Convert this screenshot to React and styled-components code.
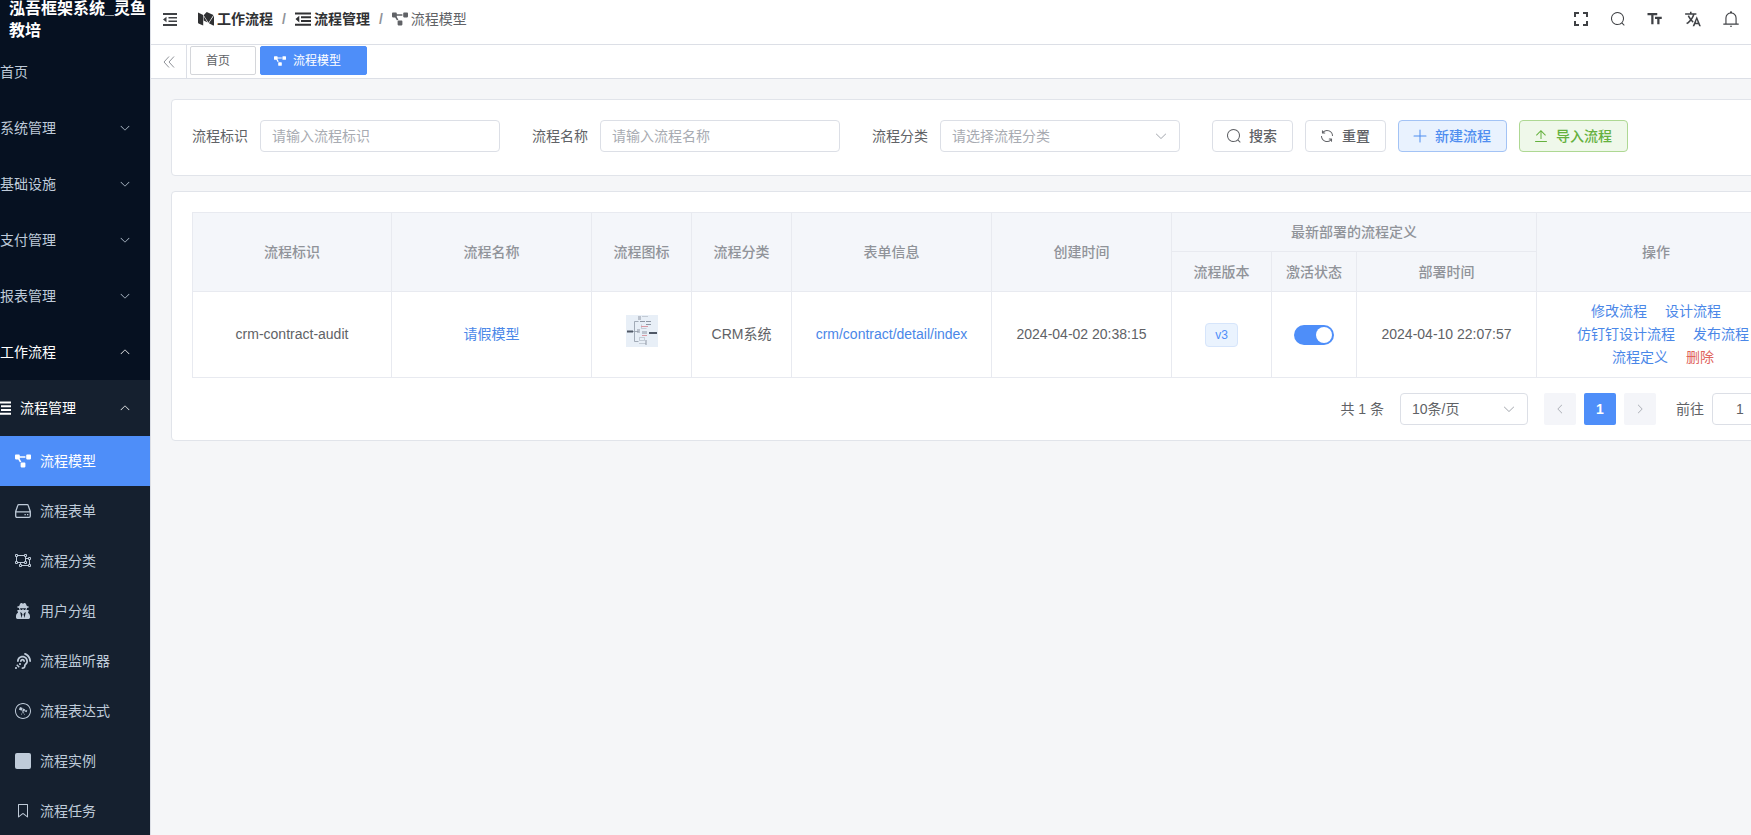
import { useState } from "react";
import styled, { createGlobalStyle, css } from "styled-components";
import {
	FaAssistiveListeningSystems,
	FaProjectDiagram,
	FaUserSecret,
	FaWpexplorer,
} from "react-icons/fa";
import { IoLanguageSharp } from "react-icons/io5";

const color = {
	primary: "#4e8ef9",
	text: "#606266",
	strong: "#303133",
	muted: "#909399",
	placeholder: "#a8abb2",
	border: "#dcdfe6",
	line: "#e8eaf0",
	page: "#f5f6f8",
	side: "#061121",
	sideDeep: "#15202f",
	sideText: "#bfcbd9",
};

const GlobalStyle = createGlobalStyle`
	*, *::before, *::after {
		box-sizing: border-box;
	}

	body {
		margin: 0;
		background: ${color.page};
		color: ${color.text};
		font-family: "Liberation Sans", "Noto Sans CJK SC", sans-serif;
		font-size: 14px;
		line-height: 20px;
	}

	button, input, select {
		font: inherit;
		color: inherit;
	}

	a {
		text-decoration: none;
	}

	svg {
		display: block;
		flex: none;
	}
`;

const paths = {
	search: "m795.904 750.72 124.992 124.928a32 32 0 0 1-45.248 45.248L750.656 795.904a416 416 0 1 1 45.248-45.248zM480 832a352 352 0 1 0 0-704 352 352 0 0 0 0 704",
	refresh: "M771.776 794.88A384 384 0 0 1 128 512h64a320 320 0 0 0 555.712 216.448H654.72a32 32 0 1 1 0-64h149.056a32 32 0 0 1 32 32v148.928a32 32 0 1 1-64 0v-50.56zM276.288 295.616h92.992a32 32 0 0 1 0 64H220.16a32 32 0 0 1-32-32V178.56a32 32 0 0 1 64 0v50.56A384 384 0 0 1 896.128 512h-64a320 320 0 0 0-555.776-216.384z",
	plus: "M480 480V128a32 32 0 0 1 64 0v352h352a32 32 0 1 1 0 64H544v352a32 32 0 1 1-64 0V544H128a32 32 0 0 1 0-64z",
	upload: "M160 832h704a32 32 0 1 1 0 64H160a32 32 0 1 1 0-64m384-578.304V704h-64V247.296L237.248 490.048 192 444.8 508.8 128l316.8 316.8-45.312 45.248L544 253.696z",
	down: "M831.872 340.864 512 652.672 192.128 340.864a30.592 30.592 0 0 0-42.752 0 29.12 29.12 0 0 0 0 41.6L489.664 714.24a32 32 0 0 0 44.672 0l340.288-331.712a29.12 29.12 0 0 0 0-41.728 30.592 30.592 0 0 0-42.752 0z",
	bell: "M512 64a64 64 0 0 1 64 64v64H448v-64a64 64 0 0 1 64-64M256 768h512V448a256 256 0 1 0-512 0zm256-640a320 320 0 0 1 320 320v384H192V448a320 320 0 0 1 320-320M96 768h832q32 0 32 32t-32 32H96q-32 0-32-32t32-32m352 128h128a64 64 0 0 1-128 0",
	tag: "M256 128v698.88l196.032-156.864a96 96 0 0 1 119.936 0L768 826.816V128zm-32-64h576a32 32 0 0 1 32 32v797.44a32 32 0 0 1-51.968 24.96L531.968 720a32 32 0 0 0-39.936 0L243.968 918.4A32 32 0 0 1 192 893.44V96a32 32 0 0 1 32-32",
};

function Glyph({ name, size = 16, turn = 0 })
{
	return (
		<svg width={size} height={size} viewBox="0 0 1024 1024" fill="currentColor" aria-hidden="true">
			<path d={paths[name]} transform={`rotate(${turn} 512 512)`} />
		</svg>
	)
}

function FullscreenIcon()
{
	return (
		<svg width="18" height="18" viewBox="0 0 18 18" fill="none" stroke="currentColor" strokeWidth="2" aria-hidden="true">
			<path d="M3 7V3h4M11 3h4v4M15 11v4h-4M7 15H3v-4" />
		</svg>
	)
}

function SizeIcon()
{
	return (
		<svg width="18" height="18" viewBox="0 0 24 24" fill="currentColor" aria-hidden="true">
			<path d="M2 4v3h5v12h3V7h5V4H2m19 5h-9v3h3v7h3v-7h3V9Z" />
		</svg>
	)
}

function FoldIcon()
{
	return (
		<svg width="16" height="16" viewBox="0 0 16 16" fill="currentColor" aria-hidden="true">
			<path d="M1 2h14v2H1zM6.500 6H15v1.500H6.500zM6.500 9.500H15V11H6.500zM1 13h14v2H1zM1 8.500 4.500 5.800v5.400z" />
		</svg>
	)
}

function OutdentIcon()
{
	return (
		<svg width="16" height="16" viewBox="0 0 16 16" fill="currentColor" aria-hidden="true">
			<path d="M0 1.500h16v2H0zM6 5.300h10v2H6zM6 9h10v2H6zM0 12.700h16v2H0zM.500 8.100 4.300 4.800v6.600z" />
		</svg>
	)
}

function FoldedMIcon()
{
	return (
		<svg width="16" height="16" viewBox="0 0 16 16" fill="currentColor" aria-hidden="true">
			<path d="M0 1.500 5.200 4.100V14.600L.5 12.400Q0 12.100 0 11.500Z" />
			<path d="M5.700 5.200 9.600 11.500 5.700 9.600Z" />
			<path d="M5.700 4.200 8.200 1.400Q8.700 .9 9.300 1.200L15.400 4.100 10.500 11.800Z" />
			<path d="M16 4.600V13.900Q16 14.800 15.200 14.400L10.900 12.300Z" />
		</svg>
	)
}

function DriveIcon()
{
	return (
		<svg width="16" height="16" viewBox="0 0 16 16" fill="none" stroke="currentColor" strokeWidth="1.300" aria-hidden="true">
			<path d="M3.800 1.600h8.400q.8 0 1 .8L15.300 8.500V13q0 1.300-1.300 1.300H2Q.7 14.300.7 13V8.500L2.800 2.400q.2-.8 1-.8ZM.8 8.800h14.400" strokeLinejoin="round" />
			<path d="M9.500 11.700h1.300M12 11.700h1.300" />
		</svg>
	)
}

function UngroupIcon()
{
	return (
		<svg width="16" height="16" viewBox="0 0 16 16" fill="none" stroke="currentColor" aria-hidden="true">
			<path d="M1.500 2.500h9v7h-9zM10.500 5.500h4v7h-9v-3" />
			<path d="M.5 1.500h2v2h-2zM9.500 1.500h2v2h-2zM.5 8.500h2v2h-2zM9.500 8.500h2v2h-2zM13.500 4.500h2v2h-2zM13.500 11.500h2v2h-2zM4.500 11.500h2v2h-2z" fill={color.sideDeep} />
		</svg>
	)
}

function SquareIcon()
{
	return (
		<svg width="16" height="16" viewBox="0 0 16 16" fill="currentColor" aria-hidden="true">
			<rect width="16" height="16" rx="2" />
		</svg>
	)
}

function DoubleLeftIcon()
{
	return (
		<svg width="14" height="14" viewBox="0 0 14 14" fill="none" stroke="currentColor" aria-hidden="true">
			<path d="M7 1.500 2 7l5 5.500M12 1.500 7 7l5 5.500" />
		</svg>
	)
}

const Preview = styled.svg`
	display: inline-block;
	vertical-align: baseline;
`;

// small preview of the process drawing
function Thumbnail()
{
	return (
		<Preview width="32" height="32" viewBox="0 0 32 32" role="img" aria-label="流程图标">
			<rect width="32" height="32" fill="#e8eff7" />
			<g fill="none" stroke="#8f99a6" strokeWidth=".8">
				<path d="M6 16.500h2M8.500 6.500v20M8.500 6.500h4M8.500 26.500h4M8.500 16.500h4" />
				<path d="M13.500 22.500h5v3h-5zM13 28.500h7M15.500 9.500v4h5" strokeOpacity=".5" />
			</g>
			<g fill="#8d96a3">
				<rect x="12" y="1" width="3" height="4" opacity=".5" />
				<rect x="16" y="1" width="6" height="1" opacity=".4" />
				<rect x="14" y="6" width="5" height="1" />
				<rect x="20" y="6" width="5" height="1" />
				<rect x="20" y="9" width="5" height="1" />
				<rect x="11" y="14" width="3" height="4" opacity=".5" />
				<rect x="16" y="16" width="5" height="3" opacity=".5" />
				<rect x="19" y="25" width="2" height="5" opacity=".5" />
			</g>
			<path d="M1 15.500h6v2H1zM23 17h8v2h-8z" fill="#4f5866" />
			<path d="M15 11.500h7M16 20.500h5" stroke="#d99aa4" />
		</Preview>
	)
}

const Layout = styled.div`
	display: flex;
	min-height: 100vh;
	overflow-x: hidden;
`;

const Sidebar = styled.aside`
	flex: none;
	width: 150px;
	background: ${color.side};
	color: ${color.sideText};
	overflow: hidden;
`;

const Logo = styled.div`
	display: flex;
	align-items: center;
	height: 40px;
	margin-bottom: 4px;
	padding-left: 9px;
	color: #fff;
	font-size: 16px;
	font-weight: 700;
	line-height: 22px;
`;

const Menu = styled.nav`
	margin-left: -29px;
`;

const SubMenu = styled.div`
	background: ${color.sideDeep};
`;

const MenuItem = styled.a`
	display: flex;
	align-items: center;
	gap: 5px;
	height: ${props => props.$level === 3 ? "50px" : "56px"};
	padding-left: ${props => ({ 1: "29px", 2: "20px", 3: "40px" })[props.$level]};
	padding-right: 19px;
	color: ${props => props.$open || props.$active ? "#fff" : color.sideText};
	background: ${props => props.$active ? color.primary : "transparent"};

	span:last-of-type {
		flex: 1;
	}
`;

const MenuIcon = styled.span`
	display: flex;
	justify-content: center;
	width: 24px;
	font-size: 16px;
`;

const Main = styled.div`
	flex: 1;
	min-width: 1681px;
	border-left: 1px solid ${color.border};
`;

const Header = styled.header`
	display: flex;
	align-items: center;
	justify-content: space-between;
	height: 45px;
	padding: 0 91px 6px 11px;
	background: #fff;
	border-bottom: 1px solid ${color.border};
`;

const HeaderSide = styled.div`
	display: flex;
	align-items: center;
	gap: 20px;
`;

const IconButton = styled.button`
	display: flex;
	padding: 0;
	border: 0;
	background: none;
	color: #3f4145;
	font-size: 18px;
`;

const Crumbs = styled.nav`
	display: flex;
	align-items: center;
`;

const Crumb = styled.a`
	display: flex;
	align-items: center;
	gap: 3px;
	color: ${props => props.$current ? color.text : color.strong};
	font-weight: ${props => props.$current ? 400 : 700};

	svg {
		font-size: 16px;
	}
`;

const Slash = styled.span`
	margin: 0 9px;
	color: ${color.muted};
	font-weight: 700;
`;

const TabBar = styled.div`
	display: flex;
	gap: 4px;
	height: 34px;
	background: #fff;
	border-bottom: 1px solid ${color.border};
`;

const TabScroll = styled.button`
	display: flex;
	align-items: center;
	justify-content: center;
	width: 36px;
	margin-right: -1px;
	padding: 0;
	border: 0;
	border-right: 1px solid ${color.border};
	background: none;
	color: ${color.muted};
`;

const Tab = styled.a`
	display: flex;
	align-items: center;
	gap: 7px;
	height: 29px;
	margin-top: 1px;
	padding: 0 25px 0 ${props => props.$active ? "13px" : "15px"};
	border: 1px solid ${props => props.$active ? color.primary : "#d4d6da"};
	border-radius: 2px;
	background: ${props => props.$active ? color.primary : "#fff"};
	color: ${props => props.$active ? "#fff" : color.text};
	font-size: 12px;
`;

const Content = styled.main`
	display: flex;
	flex-direction: column;
	gap: 15px;
	padding: 20px;
`;

const Card = styled.section`
	padding: 20px 20px 15px;
	border: 1px solid #e1e4ea;
	border-radius: 4px;
	background: #fff;
`;

const SearchForm = styled.form`
	display: flex;
	gap: 32px;
	margin-bottom: 8px;
`;

const Field = styled.div`
	display: flex;
	align-items: center;
	gap: 12px;
`;

const boxStyle = css`
	width: 100%;
	height: 32px;
	padding: 0 11px;
	border: 1px solid ${color.border};
	border-radius: 4px;
	background: #fff;
	outline: none;
`;

const Input = styled.input`
	${boxStyle}
	width: ${props => props.$width};
	text-align: ${props => props.$center ? "center" : "left"};

	&::placeholder {
		color: ${color.placeholder};
		opacity: 1;
	}
`;

const SelectWrap = styled.div`
	position: relative;
	width: ${props => props.$width};

	select {
		${boxStyle}
		appearance: none;
		color: ${props => props.$empty ? color.placeholder : color.text};
	}

	svg {
		position: absolute;
		top: 9px;
		right: 12px;
		color: ${color.placeholder};
		pointer-events: none;
	}
`;

const ButtonGroup = styled.div`
	display: flex;
	gap: 12px;
`;

const tones = {
	plain: { fg: color.text, bg: "#fff", bd: color.border },
	primary: { fg: "#4f8df0", bg: "#e9f2fe", bd: "#a3c3f5" },
	success: { fg: "#65b13e", bg: "#eff8ea", bd: "#aed893" },
};

const Button = styled.button`
	display: flex;
	align-items: center;
	gap: 7px;
	height: 32px;
	padding: 0 15px 0 13px;
	border: 1px solid ${props => tones[props.$tone].bd};
	border-radius: 4px;
	background: ${props => tones[props.$tone].bg};
	color: ${props => tones[props.$tone].fg};
	font-weight: 500;
`;

const TableBox = styled.div`
	padding-right: 14px;
`;

const Table = styled.table`
	width: 100%;
	table-layout: fixed;
	border-spacing: 0;
	border-top: 1px solid ${color.line};
	text-align: center;

	th, td {
		border-right: 1px solid ${color.line};
		border-bottom: 1px solid ${color.line};
	}

	tr:not(.sub) > :first-child {
		border-left: 1px solid ${color.line};
	}

	th {
		height: 40px;
		padding: 0;
		background: #f4f6fa;
		color: ${color.muted};
		font-weight: 500;
	}

	tr:first-child > th {
		height: 39px;
	}

	td {
		padding: 8px 12px;
		line-height: 23px;
	}
`;

const Centered = styled.div`
	display: flex;
	justify-content: center;
`;

const Actions = styled.td`
	&& {
		padding: 8px 24px;
	}
`;

const LinkButton = styled.button`
	padding: 0;
	border: 0;
	background: none;
	color: ${props => props.$danger ? "#e0635c" : "#4a87e8"};
	line-height: 23px;

	${Actions} &:not(:first-child) {
		margin-left: 14px;
	}
`;

const Tag = styled.span`
	height: 24px;
	padding: 0 9px;
	border: 1px solid #d6e5fb;
	border-radius: 4px;
	background: #eaf3fe;
	color: ${color.primary};
	font-size: 12px;
	line-height: 22px;
`;

const Switch = styled.input`
	appearance: none;
	display: flex;
	align-items: center;
	width: 40px;
	height: 20px;
	margin: 0;
	padding: 0 2px;
	border-radius: 10px;
	background: ${color.border};

	&::before {
		content: "";
		width: 16px;
		height: 16px;
		border-radius: 50%;
		background: #fff;
	}

	&:checked {
		justify-content: flex-end;
		background: ${color.primary};
	}
`;

const Pagination = styled.div`
	display: flex;
	align-items: center;
	justify-content: flex-end;
	gap: 16px;
	margin-top: 15px;
`;

const Pager = styled.div`
	display: flex;
	gap: 8px;
	margin-right: 4px;
`;

const PageButton = styled.button`
	display: flex;
	align-items: center;
	justify-content: center;
	width: 32px;
	height: 32px;
	padding: 0;
	border: 0;
	border-radius: 2px;
	background: ${props => props.$active ? color.primary : "#f4f5f9"};
	color: ${props => props.$active ? "#fff" : color.placeholder};
	font-weight: 700;
`;

const Jumper = styled.div`
	display: flex;
	align-items: center;
	gap: 8px;
`;

const sections = ["系统管理", "基础设施", "支付管理", "报表管理"];

const flowItems = [
	{ text: "流程模型", icon: <FaProjectDiagram />, active: true },
	{ text: "流程表单", icon: <DriveIcon /> },
	{ text: "流程分类", icon: <UngroupIcon /> },
	{ text: "用户分组", icon: <FaUserSecret /> },
	{ text: "流程监听器", icon: <FaAssistiveListeningSystems /> },
	{ text: "流程表达式", icon: <FaWpexplorer /> },
	{ text: "流程实例", icon: <SquareIcon /> },
	{ text: "流程任务", icon: <Glyph name="tag" /> },
];

function SideMenu()
{
	return (
		<Sidebar>
			<Logo>泓吾框架系统_灵鱼教培</Logo>
			<Menu>
				<MenuItem href="#" $level={1}><span>首页</span></MenuItem>
				{sections.map(text => (
					<MenuItem href="#" key={text} $level={1}>
						<span>{text}</span>
						<Glyph name="down" size={12} />
					</MenuItem>
				))}
				<MenuItem href="#" $level={1} $open>
					<span>工作流程</span>
					<Glyph name="down" size={12} turn={180} />
				</MenuItem>
				<SubMenu>
					<MenuItem href="#" $level={2} $open>
						<MenuIcon><OutdentIcon /></MenuIcon>
						<span>流程管理</span>
						<Glyph name="down" size={12} turn={180} />
					</MenuItem>
					{flowItems.map(item => (
						<MenuItem href="#" key={item.text} $level={3} $active={item.active}>
							<MenuIcon>{item.icon}</MenuIcon>
							<span>{item.text}</span>
						</MenuItem>
					))}
				</SubMenu>
			</Menu>
		</Sidebar>
	)
}

function TopBar()
{
	return (
		<Header>
			<HeaderSide>
				<IconButton aria-label="折叠菜单"><FoldIcon /></IconButton>
				<Crumbs>
					<Crumb href="#"><FoldedMIcon />工作流程</Crumb>
					<Slash>/</Slash>
					<Crumb href="#"><OutdentIcon />流程管理</Crumb>
					<Slash>/</Slash>
					<Crumb href="#" $current><FaProjectDiagram />流程模型</Crumb>
				</Crumbs>
			</HeaderSide>
			<HeaderSide>
				<IconButton aria-label="全屏"><FullscreenIcon /></IconButton>
				<IconButton aria-label="搜索"><Glyph name="search" /></IconButton>
				<IconButton aria-label="字号"><SizeIcon /></IconButton>
				<IconButton aria-label="语言"><IoLanguageSharp /></IconButton>
				<IconButton aria-label="消息"><Glyph name="bell" size={18} /></IconButton>
			</HeaderSide>
		</Header>
	)
}

function Filters()
{
	const [category, setCategory] = useState("");

	return (
		<Card>
			<SearchForm onSubmit={e => e.preventDefault()}>
				<Field>
					<label htmlFor="flow-key">流程标识</label>
					<Input id="flow-key" $width="240px" placeholder="请输入流程标识" />
				</Field>
				<Field>
					<label htmlFor="flow-name">流程名称</label>
					<Input id="flow-name" $width="240px" placeholder="请输入流程名称" />
				</Field>
				<Field>
					<label htmlFor="flow-category">流程分类</label>
					<SelectWrap $width="240px" $empty={!category}>
						<select id="flow-category" value={category} onChange={e => setCategory(e.target.value)}>
							<option value="">请选择流程分类</option>
							<option value="crm">CRM系统</option>
						</select>
						<Glyph name="down" size={14} />
					</SelectWrap>
				</Field>
				<ButtonGroup>
					<Button type="submit" $tone="plain"><Glyph name="search" />搜索</Button>
					<Button type="reset" $tone="plain"><Glyph name="refresh" />重置</Button>
					<Button type="button" $tone="primary"><Glyph name="plus" />新建流程</Button>
					<Button type="button" $tone="success"><Glyph name="upload" />导入流程</Button>
				</ButtonGroup>
			</SearchForm>
		</Card>
	)
}

const columnWidths = [200, 200, 100, 100, 200, 180, 100, 85, 180];

function ModelTable()
{
	const [active, setActive] = useState(true);

	return (
		<TableBox>
			<Table>
				<colgroup>
					{columnWidths.map((width, index) => <col key={index} width={width} />)}
					<col />
				</colgroup>
				<thead>
					<tr>
						<th rowSpan="2">流程标识</th>
						<th rowSpan="2">流程名称</th>
						<th rowSpan="2">流程图标</th>
						<th rowSpan="2">流程分类</th>
						<th rowSpan="2">表单信息</th>
						<th rowSpan="2">创建时间</th>
						<th colSpan="3">最新部署的流程定义</th>
						<th rowSpan="2">操作</th>
					</tr>
					<tr className="sub">
						<th>流程版本</th>
						<th>激活状态</th>
						<th>部署时间</th>
					</tr>
				</thead>
				<tbody>
					<tr>
						<td>crm-contract-audit</td>
						<td><LinkButton>请假模型</LinkButton></td>
						<td><Thumbnail /></td>
						<td>CRM系统</td>
						<td><LinkButton>crm/contract/detail/index</LinkButton></td>
						<td>2024-04-02 20:38:15</td>
						<td><Centered><Tag>v3</Tag></Centered></td>
						<td>
							<Centered>
								<Switch
									type="checkbox"
									role="switch"
									aria-label="激活状态"
									checked={active}
									onChange={e => setActive(e.target.checked)}
								/>
							</Centered>
						</td>
						<td>2024-04-10 22:07:57</td>
						<Actions>
							<LinkButton>修改流程</LinkButton>{" "}
							<LinkButton>设计流程</LinkButton>{" "}
							<LinkButton>仿钉钉设计流程</LinkButton>{" "}
							<LinkButton>发布流程</LinkButton>{" "}
							<LinkButton>流程定义</LinkButton>{" "}
							<LinkButton $danger>删除</LinkButton>
						</Actions>
					</tr>
				</tbody>
			</Table>
		</TableBox>
	)
}

function TablePager()
{
	return (
		<Pagination>
			<span>共 1 条</span>
			<SelectWrap $width="128px">
				<select aria-label="每页条数" defaultValue="10">
					<option value="10">10条/页</option>
					<option value="20">20条/页</option>
				</select>
				<Glyph name="down" size={14} />
			</SelectWrap>
			<Pager>
				<PageButton aria-label="上一页"><Glyph name="down" size={12} turn={90} /></PageButton>
				<PageButton $active>1</PageButton>
				<PageButton aria-label="下一页"><Glyph name="down" size={12} turn={270} /></PageButton>
			</Pager>
			<Jumper>
				<label htmlFor="page-jump">前往</label>
				<Input id="page-jump" $width="56px" $center defaultValue="1" />
				<span>页</span>
			</Jumper>
		</Pagination>
	)
}

export default function App()
{
	return (
		<>
			<GlobalStyle />
			<Layout>
				<SideMenu />
				<Main>
					<TopBar />
					<TabBar>
						<TabScroll aria-label="向左滚动"><DoubleLeftIcon /></TabScroll>
						<Tab href="#">首页</Tab>
						<Tab href="#" $active><FaProjectDiagram />流程模型</Tab>
					</TabBar>
					<Content>
						<Filters />
						<Card>
							<ModelTable />
							<TablePager />
						</Card>
					</Content>
				</Main>
			</Layout>
		</>
	)
}
